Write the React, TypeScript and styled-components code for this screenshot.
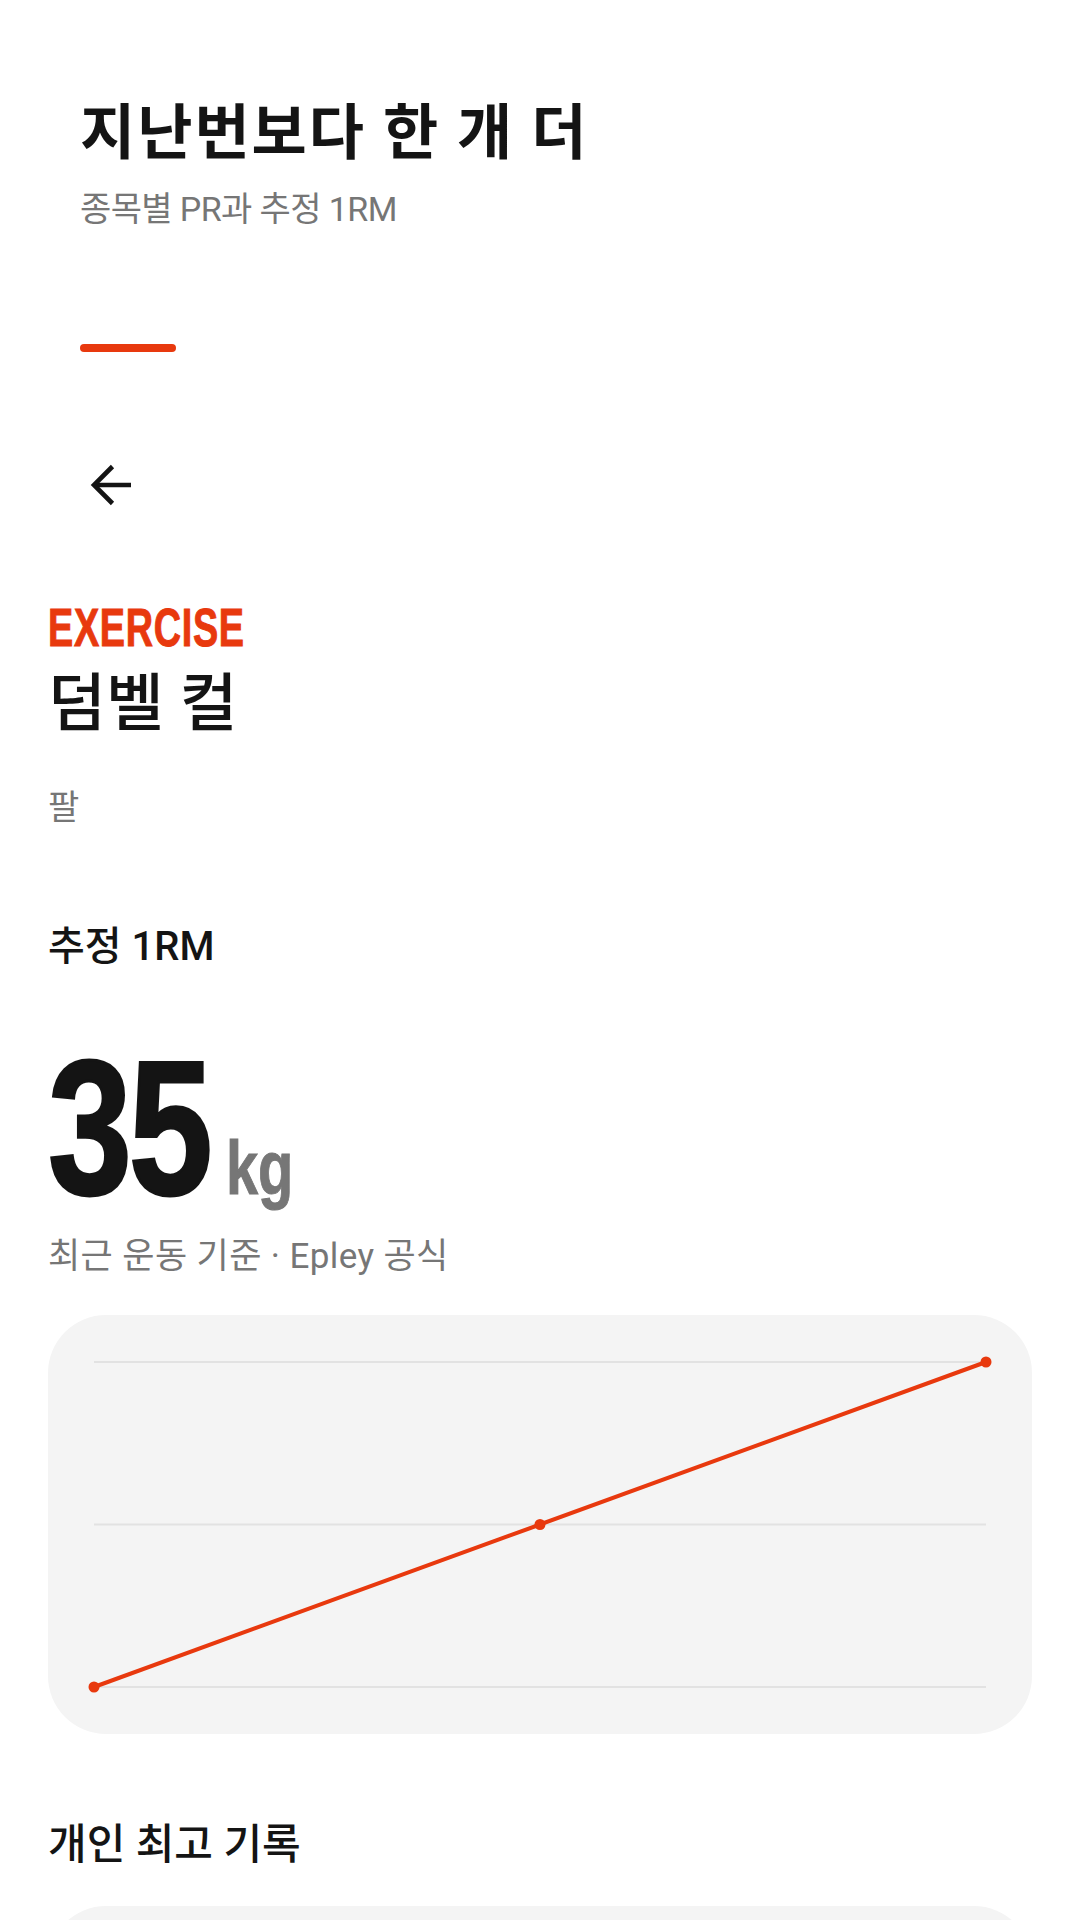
import React from "react";
import styled, { createGlobalStyle } from "styled-components";

const ACCENT = "#E8390E";
const INK = "#141414";
const MUTED = "#767676";

const GlobalStyle = createGlobalStyle`
  html, body {
    margin: 0;
    padding: 0;
    background: #ffffff;
  }
  body {
    font-family: Roboto, "Noto Sans CJK KR", "Noto Sans", sans-serif;
    color: ${INK};
    -webkit-font-smoothing: antialiased;
  }
  * { box-sizing: border-box; }
`;

const Page = styled.div`
  width: 1080px;
  min-height: 1920px;
  overflow: hidden;
  display: flex;
  flex-direction: column;
`;

const Header = styled.header`
  display: flex;
  flex-direction: column;
  align-items: flex-start;
  padding: 95px 80px 0;
`;

const Title = styled.h1`
  margin: 0;
  font-size: 60px;
  line-height: 1.3;
  font-weight: 700;
  letter-spacing: 2px;
  color: ${INK};
`;

const Subtitle = styled.p`
  margin: 14px 0 0;
  font-size: 34px;
  line-height: 1.3;
  font-weight: 400;
  letter-spacing: -0.6px;
  color: ${MUTED};
`;

const AccentBar = styled.div`
  width: 96px;
  height: 8px;
  border-radius: 4px;
  background: ${ACCENT};
  margin-top: 113px;
`;

const BackButton = styled.button`
  margin: 103px 0 0;
  width: 60px;
  height: 60px;
  padding: 0;
  border: none;
  background: transparent;
  display: flex;
  align-items: center;
  justify-content: center;
  color: ${INK};
  cursor: pointer;
`;

const Content = styled.main`
  display: flex;
  flex-direction: column;
  padding: 0 48px;
`;

/* Narrow display face: a bold sans squeezed horizontally */
const Condensed = styled.span<{ $scale: number }>`
  display: inline-block;
  font-family: "Liberation Sans", Arial, sans-serif;
  font-weight: 700;
  line-height: 1;
  transform: scaleX(${(p) => p.$scale});
  transform-origin: left bottom;
`;

const Eyebrow = styled.div`
  margin-top: 85px;
  display: flex;
  color: ${ACCENT};
  font-size: 54px;
  line-height: 1;
`;

const EyebrowText = styled(Condensed)`
  -webkit-text-stroke: 1px ${ACCENT};
  letter-spacing: 1px;
`;

const ExerciseName = styled.h2`
  margin: 9px 0 0;
  font-size: 63px;
  line-height: 1.3;
  font-weight: 500;
  color: ${INK};
`;

const Category = styled.div`
  margin-top: 40px;
  font-size: 34px;
  line-height: 1.3;
  color: ${MUTED};
`;

const SectionLabel = styled.h3`
  margin: 92px 0 0;
  font-size: 40px;
  line-height: 1.3;
  font-weight: 500;
  color: ${INK};
`;

const ValueRow = styled.div`
  margin-top: 59px;
  display: flex;
  align-items: baseline;
`;

const BigNumber = styled(Condensed)`
  font-size: 191px;
  color: ${INK};
  letter-spacing: -4px;
  -webkit-text-stroke: 3px ${INK};
`;

const Unit = styled(Condensed)`
  font-size: 76px;
  color: ${MUTED};
  margin-left: -26px;
  -webkit-text-stroke: 1px ${MUTED};
`;

const Caption = styled.p`
  margin: 11px 0 0;
  font-size: 35px;
  line-height: 1.3;
  letter-spacing: 0.4px;
  color: ${MUTED};
`;

const ChartCard = styled.section`
  margin-top: 35px;
  background: #f4f4f4;
  border-radius: 58px;
  padding: 47px 46px;
`;

const ChartSvg = styled.svg`
  display: block;
  width: 100%;
  height: 325px;
  overflow: visible;
`;

const RecordsTitle = styled.h3`
  margin: 84px 0 0;
  font-size: 42px;
  line-height: 1.3;
  font-weight: 500;
  color: ${INK};
`;

const RecordsCard = styled.section`
  margin-top: 34px;
  height: 200px;
  background: #f4f4f4;
  border-radius: 58px;
`;

const points = [35, 36.5, 38];

function TrendChart() {
  const w = 892;
  const h = 325;
  const min = Math.min(...points);
  const max = Math.max(...points);
  const coords = points.map((v, i) => ({
    x: (i / (points.length - 1)) * w,
    y: h - ((v - min) / (max - min)) * h,
  }));
  const grid = [0, h / 2, h];
  return (
    <ChartSvg viewBox={`0 0 ${w} ${h}`}>
      {grid.map((y) => (
        <line key={y} x1={0} x2={w} y1={y} y2={y} stroke="#e2e2e2" strokeWidth={2} />
      ))}
      <polyline
        points={coords.map((c) => `${c.x},${c.y}`).join(" ")}
        fill="none"
        stroke={ACCENT}
        strokeWidth={4}
        strokeLinejoin="round"
      />
      {coords.map((c) => (
        <circle key={c.x} cx={c.x} cy={c.y} r={5.5} fill={ACCENT} />
      ))}
    </ChartSvg>
  );
}

function BackArrow() {
  return (
    <svg width="44" height="44" viewBox="0 0 44 44" fill="none" stroke="currentColor" strokeWidth="4.6" strokeLinejoin="miter" strokeLinecap="butt">
      <path d="M6 22H43" />
      <path d="M24.5 3.5L6 22l18.5 18.5" />
    </svg>
  );
}

export default function App() {
  return (
    <Page>
      <GlobalStyle />
      <Header>
        <Title>지난번보다 한 개 더</Title>
        <Subtitle>종목별 PR과 추정 1RM</Subtitle>
        <AccentBar />
        <BackButton aria-label="뒤로">
          <BackArrow />
        </BackButton>
      </Header>
      <Content>
        <Eyebrow>
          <EyebrowText $scale={0.7}>EXERCISE</EyebrowText>
        </Eyebrow>
        <ExerciseName>덤벨 컬</ExerciseName>
        <Category>팔</Category>
        <SectionLabel>추정 1RM</SectionLabel>
        <ValueRow>
          <BigNumber $scale={0.79}>35</BigNumber>
          <Unit $scale={0.76}>kg</Unit>
        </ValueRow>
        <Caption>최근 운동 기준 · Epley 공식</Caption>
        <ChartCard>
          <TrendChart />
        </ChartCard>
        <RecordsTitle>개인 최고 기록</RecordsTitle>
        <RecordsCard />
      </Content>
    </Page>
  );
}
